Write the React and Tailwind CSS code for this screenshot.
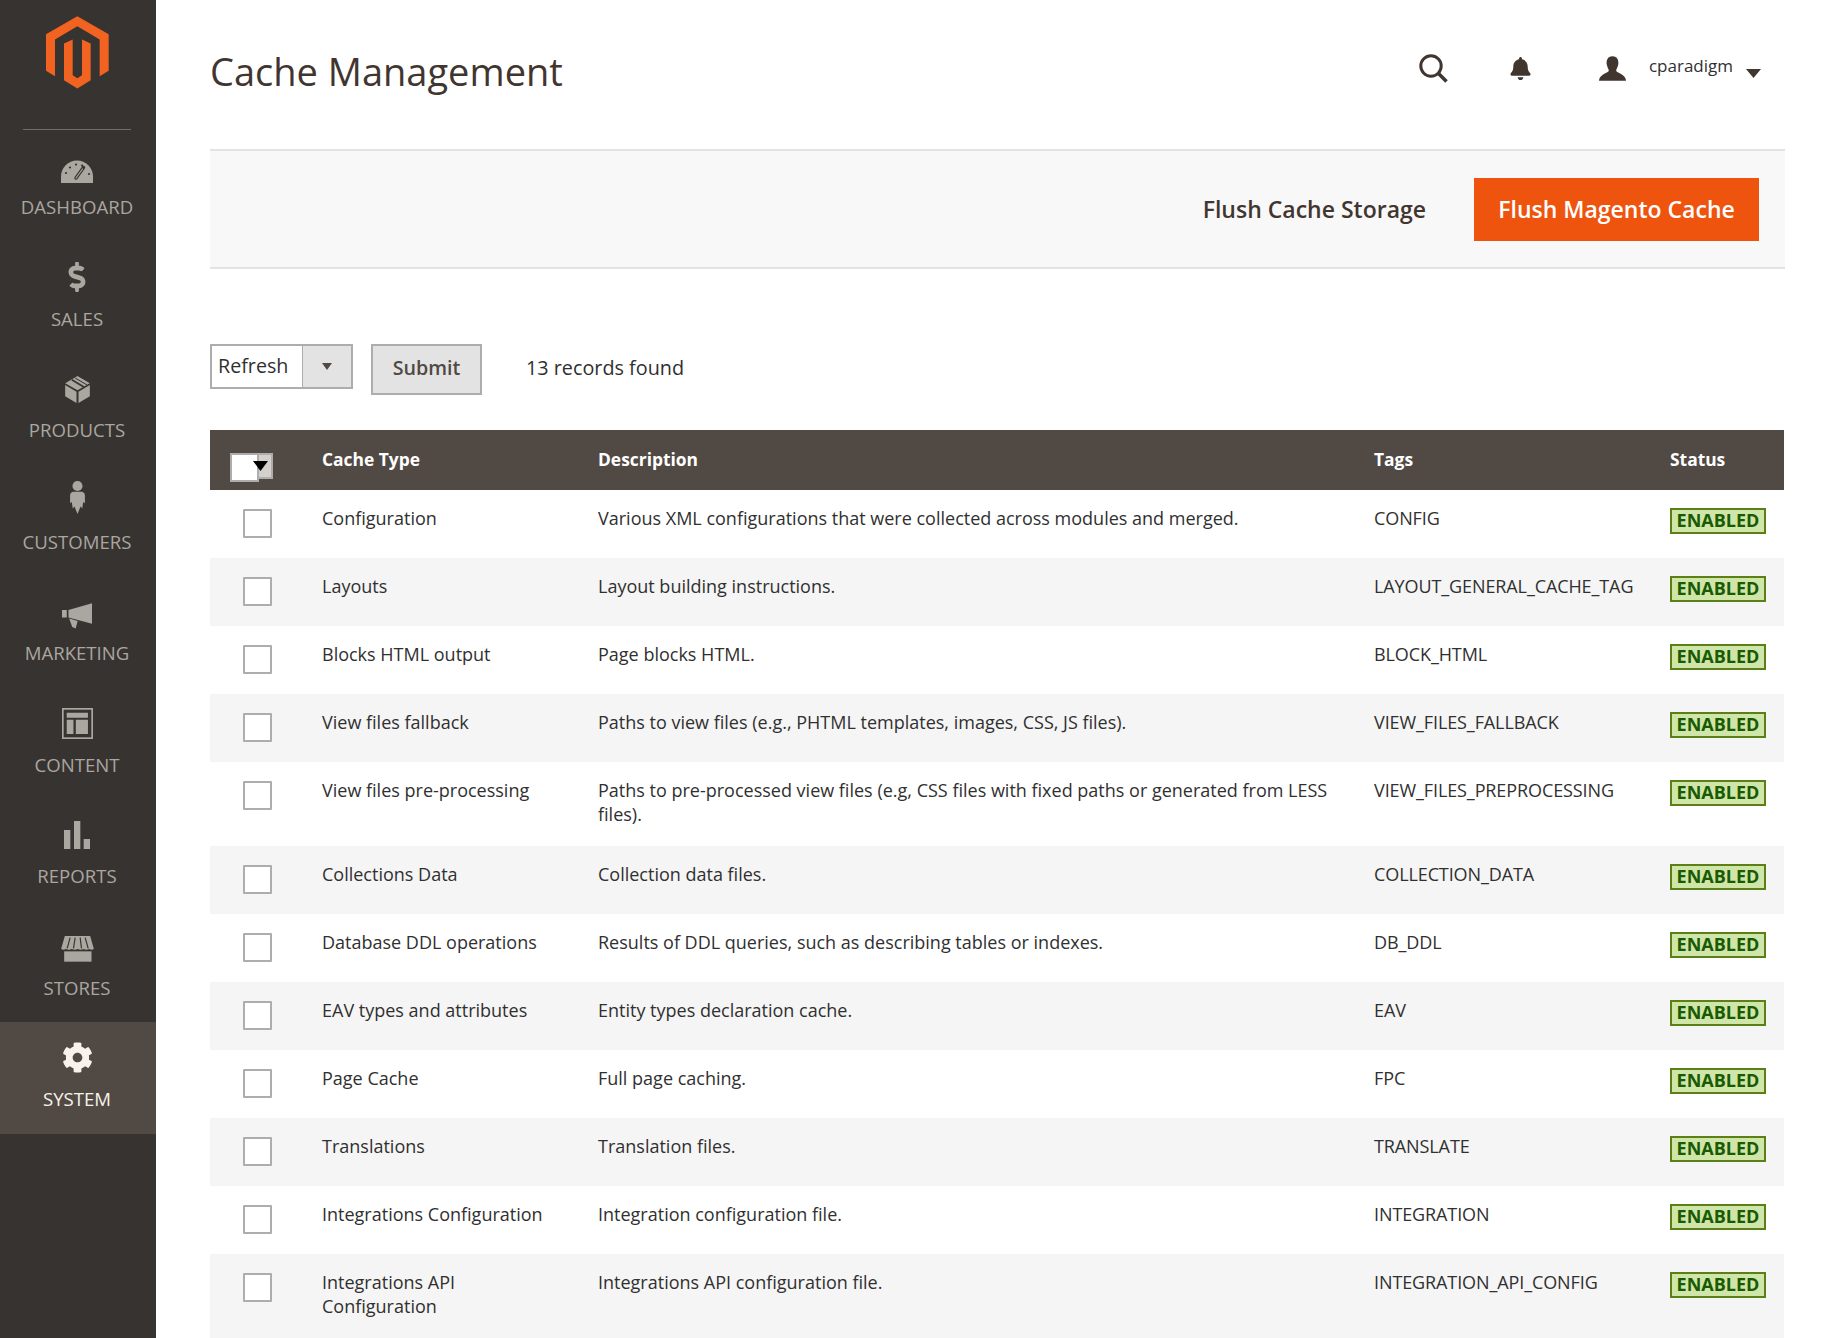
import React from "react";
import { FaBell, FaCog, FaDollarSign } from "react-icons/fa";

const Logo = () => (
  <svg width="63" height="73" viewBox="138 48 189 218" className="block">
    <path fill="#f26322" d="M232 48 L326 102 V212 L299 228 V118 L232 78 L165 118 V228 L138 212 V102 Z" />
    <path fill="#f26322" d="M192 130 L218 118 V225 L232 234 L246 225 V118 L272 130 V240 L232 265 L192 240 Z" />
  </svg>
);

const Gauge = () => (
  <svg width="32" height="23" viewBox="0 0 32 23" className="mt-[13px]">
    <path fill="#aaa6a0" d="M0 23 V17 A16 16.5 0 0 1 32 17 V23 Z" />
    <g fill="#373330">
      <circle cx="5" cy="13" r="1.1" /><circle cx="9" cy="7.5" r="1.1" /><circle cx="15" cy="4.5" r="1.1" /><circle cx="21" cy="5.5" r="1.1" /><circle cx="28" cy="14" r="1.1" />
    </g>
    <path stroke="#373330" strokeWidth="3.4" strokeLinecap="round" d="M22.5 7.5 L15 18" />
    <path stroke="#aaa6a0" strokeWidth="1.2" strokeLinecap="round" d="M21.5 9 L15 18" />
  </svg>
);

const Box = () => (
  <svg width="25" height="27" viewBox="192 1125 74 81" className="mt-[2px]">
    <path fill="#aaa6a0" d="M229 1125 L266 1147 L229 1168 L192 1147 Z" />
    <path fill="none" stroke="#373330" strokeWidth="5" d="M212 1136 L248 1158" />
    <path fill="none" stroke="#373330" strokeWidth="3" d="M222 1131 L258 1152" />
    <path fill="#aaa6a0" d="M192 1152 L226 1172 V1206 L192 1186 Z M232 1172 L266 1152 V1186 L232 1206 Z" />
  </svg>
);

const Person = () => (
  <svg width="15" height="33" viewBox="210 90 44 98" className="mb-[4px]">
    <circle cx="232" cy="105" r="15" fill="#aaa6a0" />
    <path fill="#aaa6a0" d="M218 122 H246 Q254 124 254 132 V156 L249 152 L246 172 L241 166 L232 188 L223 166 L218 172 L215 152 L210 156 V132 Q210 124 218 122Z" />
  </svg>
);

const Megaphone = () => (
  <svg width="30" height="26" viewBox="186 458 88 75" className="mt-[10px]">
    <path fill="#aaa6a0" d="M205 478 L274 458 V518 L205 500 Z M186 478 H200 V500 H186 Z M207 503 L232 510 L226 532 L216 528 Z" />
  </svg>
);

const Content = () => (
  <svg width="31" height="31" viewBox="183 773 92 92" className="mt-[1px]">
    <rect x="185.5" y="775.5" width="87" height="87" fill="none" stroke="#aaa6a0" strokeWidth="5" />
    <path fill="#aaa6a0" d="M197 787 H260 V802 H197 Z M197 808 H217 V850 H197 Z M224 808 H260 V850 H224 Z" />
  </svg>
);

const Bars = () => (
  <svg width="26" height="28" viewBox="191 1113 78 84" className="mt-[2px]">
    <path fill="#aaa6a0" d="M191 1140 H210 V1197 H191 Z M221 1113 H240 V1197 H221 Z M250 1167 H269 V1197 H250 Z" />
  </svg>
);

const Store = () => (
  <svg width="33" height="26" viewBox="181 175 98 78" className="mt-[7px]">
    <path fill="#aaa6a0" d="M192 175 H268 L279 213 Q274 219 265 214 Q256 219 248 214 Q239 219 231 214 Q222 219 213 214 Q204 219 195 214 Q186 219 181 213 Z" />
    <path fill="none" stroke="#373330" strokeWidth="3.5" d="M208 180 L199 212 M223 180 L218 212 M238 180 L242 212 M253 180 L262 212" />
    <path fill="#aaa6a0" d="M190 221 H272 V252 H190 Z" />
  </svg>
);

const nav = [
  ["DASHBOARD", <Gauge />],
  ["SALES", <FaDollarSign size={30} color="#aaa6a0" />],
  ["PRODUCTS", <Box />],
  ["CUSTOMERS", <Person />],
  ["MARKETING", <Megaphone />],
  ["CONTENT", <Content />],
  ["REPORTS", <Bars />],
  ["STORES", <Store />],
  ["SYSTEM", <FaCog size={31} color="#f7f3eb" className="mt-[1px]" />, true],
];

const rows = [
  ["Configuration", "Various XML configurations that were collected across modules and merged.", "CONFIG"],
  ["Layouts", "Layout building instructions.", "LAYOUT_GENERAL_CACHE_TAG"],
  ["Blocks HTML output", "Page blocks HTML.", "BLOCK_HTML"],
  ["View files fallback", "Paths to view files (e.g., PHTML templates, images, CSS, JS files).", "VIEW_FILES_FALLBACK"],
  ["View files pre-processing", "Paths to pre-processed view files (e.g, CSS files with fixed paths or generated from LESS files).", "VIEW_FILES_PREPROCESSING"],
  ["Collections Data", "Collection data files.", "COLLECTION_DATA"],
  ["Database DDL operations", "Results of DDL queries, such as describing tables or indexes.", "DB_DDL"],
  ["EAV types and attributes", "Entity types declaration cache.", "EAV"],
  ["Page Cache", "Full page caching.", "FPC"],
  ["Translations", "Translation files.", "TRANSLATE"],
  ["Integrations Configuration", "Integration configuration file.", "INTEGRATION"],
  ["Integrations API Configuration", "Integrations API configuration file.", "INTEGRATION_API_CONFIG"],
];

export default function App() {
  return (
    <div className="flex h-[1338px] overflow-hidden bg-white font-['Open_Sans',sans-serif] text-[#303030]">
      <aside className="w-[156px] shrink-0 bg-[#373330]">
        <div className="h-[129px] flex justify-center pt-[16px] pr-[2px]"><Logo /></div>
        <div className="ml-[23px] mr-[25px] h-px bg-[#736d68]" />
        {nav.map(([label, icon, active]) => (
          <div key={label} className={`h-[111.5px] pr-[2px] flex flex-col items-center ${active ? "bg-[#514943] text-[#f7f3eb]" : "text-[#aaa6a0]"}`}>
            <div className="h-[70px] flex items-center justify-center">{icon}</div>
            <div className="text-[18.6px] leading-[14px]">{label}</div>
          </div>
        ))}
      </aside>
      <main className="flex-1 min-w-0 pl-[54px] pr-[39px]">
        <header className="h-[149px] flex items-start justify-between">
          <h1 className="mt-[46px] text-[38px] leading-[50px] text-[#41362f]">Cache Management</h1>
          <div className="flex items-center mt-[54px] mr-[24px] text-[#41362f]">
            <svg width="29" height="29" viewBox="0 0 29 29" fill="none" stroke="#41362f" strokeWidth="3"><circle cx="12" cy="12" r="10.2" /><path d="M19 19 L27.5 27.5" strokeWidth="3.5" /></svg>
            <FaBell size={23} color="#41362f" className="ml-[61px]" />
            <svg width="27" height="25" viewBox="655 75 80 73" className="ml-[67px]"><path fill="#41362f" d="M695 75 C680 75 676 88 678 100 C679 108 684 113 684 118 C684 124 655 128 655 148 H735 C735 128 706 124 706 118 C706 113 711 108 712 100 C714 88 710 75 695 75Z" /></svg>
            <span className="ml-[23px] text-[17px] leading-[24px] -mt-[6px] text-[#303030]">cparadigm</span>
            <svg width="15" height="9" viewBox="0 0 15 9" className="ml-[13px] mt-[10px]"><path fill="#41362f" d="M0 0 H15 L7.5 9 Z" /></svg>
          </div>
        </header>
        <section className="h-[120px] bg-[#f8f8f8] border-y-2 border-[#e3e3e3] flex items-center justify-end pr-[26px]">
          <span className="text-[23px] font-semibold text-[#41362f] mr-[48px]">Flush Cache Storage</span>
          <button className="h-[63px] w-[285px] bg-[#ef540f] text-white text-[23px] font-semibold">Flush Magento Cache</button>
        </section>
        <div className="mt-[75px] flex items-start">
          <div className="flex h-[45px] w-[143px] border-2 border-[#adadad]">
            <div className="flex-1 bg-white pl-[6px] text-[19.7px] leading-[40px]">Refresh</div>
            <div className="w-[49px] bg-[#e3e3e3] border-l border-[#adadad] flex items-center justify-center">
              <svg width="10" height="7" viewBox="0 0 10 7"><path fill="#514943" d="M0 0 H10 L5 7 Z" /></svg>
            </div>
          </div>
          <button className="ml-[18px] h-[51px] w-[111px] pb-[3px] bg-[#e3e3e3] border-2 border-[#adadad] text-[19.7px] font-semibold text-[#514943]">Submit</button>
          <span className="ml-[44px] text-[19.8px] leading-[47px]">13 records found</span>
        </div>
        <table className="mt-[35px] w-[1574px] table-fixed border-collapse text-[18px] leading-[24px]">
          <colgroup>
            <col className="w-[112px]" /><col className="w-[276px]" /><col className="w-[776px]" /><col className="w-[296px]" /><col className="w-[114px]" />
          </colgroup>
          <thead>
            <tr className="h-[60px] bg-[#514943] text-white text-left">
              <th className="relative">
                <div className="absolute left-[20px] top-[23px] h-[26px] w-[43px] bg-[#d4d1cc] border-2 border-[#adadad]" />
                <div className="absolute left-[20px] top-[23px] h-[29px] w-[29px] bg-white border-2 border-[#adadad]" />
                <svg width="15" height="10" viewBox="0 0 15 10" className="absolute left-[43px] top-[31px]"><path fill="#000" d="M0 0 H15 L7.5 10 Z" /></svg>
              </th>
              <th className="font-bold text-[17.4px] pb-[2px]">Cache Type</th>
              <th className="font-bold text-[17.4px] pb-[2px]">Description</th>
              <th className="font-bold text-[17.4px] pb-[2px]">Tags</th>
              <th className="font-bold text-[17.4px] pb-[2px]">Status</th>
            </tr>
          </thead>
          <tbody>
            {rows.map((r, i) => (
              <tr key={r[0]} className={i % 2 ? "bg-[#f5f5f5] align-top" : "bg-white align-top"}>
                <td className="pt-[19px] pb-[20px] pl-[33px]">
                  <div className="h-[29px] w-[29px] bg-white border-2 border-[#adadad] rounded-[1px]" />
                </td>
                <td className="pt-[16px] pb-[20px] pr-[40px]">{r[0]}</td>
                <td className="pt-[16px] pb-[20px] pr-[30px]">{r[1]}</td>
                <td className="pt-[16px] pb-[20px] tracking-[-0.1px]">{r[2]}</td>
                <td className="pt-[18px]">
                  <div className="h-[26px] w-[96px] bg-[#d0e5a9] border-2 border-[#5b8116] text-[#185b00] text-[18px] leading-[21px] font-bold text-center">ENABLED</div>
                </td>
              </tr>
            ))}
          </tbody>
        </table>
      </main>
    </div>
  );
}
